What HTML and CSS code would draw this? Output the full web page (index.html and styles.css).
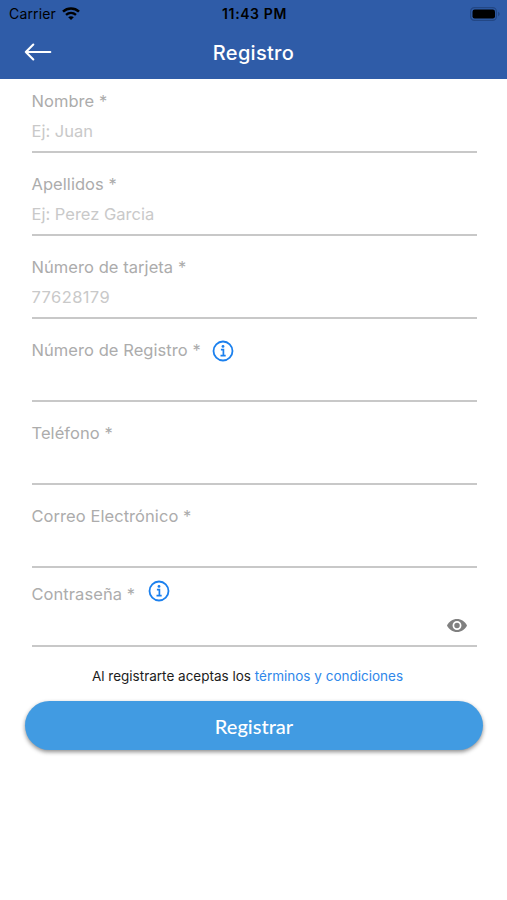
FILE: index.html
```html
<!DOCTYPE html>
<html lang="es">
<head>
  <meta charset="UTF-8">
  <meta name="viewport" content="width=device-width, initial-scale=1">
  <title>Registro</title>
  <link rel="stylesheet" href="styles.css">
</head>
<body>

<header class="cabecera">
  <div class="estado">
    <div class="operador">
      <span>Carrier</span>
      <svg class="wifi" viewBox="0 0 18 13">
        <path d="M1 4.6C5.6.5 12.4.5 17 4.6" fill="none" stroke="#000" stroke-width="2.6"/>
        <path d="M4 7.8c3-2.6 7-2.6 10 0" fill="none" stroke="#000" stroke-width="2.4"/>
        <path d="M9 13 6.2 10.2c1.6-1.4 4-1.4 5.6 0z"/>
      </svg>
    </div>
    <span class="hora">11:43 PM</span>
    <svg class="bateria" viewBox="0 0 30 14">
      <rect x=".6" y=".6" width="25.8" height="12.8" rx="3.8" fill="none" stroke="#234785" stroke-width="1.2"/>
      <rect x="2.500" y="2.500" width="22.500" height="9" rx="2.2"/>
      <path d="M28 4.8c2.2.8 2.2 3.6 0 4.4z" fill="#234785"/>
    </svg>
  </div>
  <div class="barra">
    <svg class="volver" viewBox="0 0 28 18">
      <path d="M9.3 1.5 1.8 9l7.5 7.5M1.8 9H26.3" fill="none" stroke="#fff" stroke-width="2.1" stroke-linecap="round" stroke-linejoin="round"/>
    </svg>
    <h1 class="titulo">Registro</h1>
  </div>
</header>

<form class="formulario">
  <div class="campo">
    <label class="etiqueta" for="nombre">Nombre *</label>
    <input class="entrada" id="nombre" type="text" placeholder="Ej: Juan">
  </div>
  <div class="campo">
    <label class="etiqueta" for="apellidos">Apellidos *</label>
    <input class="entrada" id="apellidos" type="text" placeholder="Ej: Perez Garcia">
  </div>
  <div class="campo">
    <label class="etiqueta" for="tarjeta">Número de tarjeta *</label>
    <input class="entrada numero" id="tarjeta" type="text" placeholder="77628179">
  </div>
  <div class="campo">
    <label class="etiqueta" for="registro">Número de Registro *
      <svg class="info" viewBox="0 0 22 22">
        <circle cx="11" cy="11" r="9.5" fill="none" stroke="#1b80ee" stroke-width="1.8"/>
        <circle cx="11" cy="6.4" r="1.4" fill="#1b80ee"/>
        <path d="M8.9 9.7h2.5v5.9M8.5 15.7h5.2" fill="none" stroke="#1b80ee" stroke-width="1.7"/>
      </svg>
    </label>
    <input class="entrada" id="registro" type="text">
  </div>
  <div class="campo">
    <label class="etiqueta" for="telefono">Teléfono *</label>
    <input class="entrada" id="telefono" type="tel">
  </div>
  <div class="campo">
    <label class="etiqueta" for="correo">Correo Electrónico *</label>
    <input class="entrada" id="correo" type="email">
  </div>
  <div class="campo campo-clave">
    <label class="etiqueta" for="clave">Contraseña *
      <svg class="info" viewBox="0 0 22 22">
        <circle cx="11" cy="11" r="9.5" fill="none" stroke="#1b80ee" stroke-width="1.8"/>
        <circle cx="11" cy="6.4" r="1.4" fill="#1b80ee"/>
        <path d="M8.9 9.7h2.5v5.9M8.5 15.7h5.2" fill="none" stroke="#1b80ee" stroke-width="1.7"/>
      </svg>
    </label>
    <div class="fila">
      <input class="entrada" id="clave" type="password">
      <svg class="ojo" viewBox="0 0 20 13">
        <path d="M0 6.5C2 2.5 5.7 0 10 0s8 2.5 10 6.5C18 10.5 14.3 13 10 13S2 10.5 0 6.500z" fill="#808080"/>
        <circle cx="10" cy="6.5" r="3.6" fill="#808080" stroke="#fff" stroke-width="1.7"/>
      </svg>
    </div>
  </div>

  <p class="terminos">Al registrarte aceptas los <a href="#">términos y condiciones</a></p>
  <button class="boton" type="button">Registrar</button>
</form>

</body>
</html>
```
FILE: styles.css
```css
* {
  margin: 0;
  padding: 0;
  box-sizing: border-box;
}

body {
  min-height: 100vh;
  background: white;
  font-family: Inter, "Liberation Sans", sans-serif;
}

.cabecera {
  height: 79px;
  background: #2f5ca8;
}

.estado {
  display: grid;
  grid-template-columns: 1fr auto 1fr;
  align-items: center;
  height: 27px;
  padding: 0 7px 0 9px;
  font-size: 14px;
  color: black;
}

.operador {
  display: flex;
  align-items: center;
  gap: 6px;
  letter-spacing: 0.15px;
}

.wifi {
  width: 18px;
  height: 13px;
}

.hora {
  font-size: 14px;
  font-weight: 600;
  letter-spacing: 0.6px;
}

.bateria {
  justify-self: end;
  width: 30px;
  height: 14px;
}

.barra {
  display: grid;
  grid-template-columns: 1fr auto 1fr;
  align-items: center;
  height: 51px;
  padding: 0 24px;
}

.volver {
  width: 28px;
  height: 18px;
  margin-top: -1px;
}

.titulo {
  font-size: 20px;
  font-weight: 500;
  letter-spacing: 0.3px;
  color: white;
}

.formulario {
  padding: 0 24px 20px 25px;
}

.campo {
  height: 83px;
  margin: 0 6px 0 6.5px;
  padding-top: 20px;
}

.campo:first-child {
  height: 74px;
  padding-top: 11px;
}

.etiqueta {
  display: flex;
  align-items: center;
  gap: 11px;
  height: 21px;
  font-size: 16.5px;
  letter-spacing: 0.06px;
  color: #acacac;
}

.info {
  width: 22px;
  height: 22px;
  margin-top: 3px;
}

.entrada {
  display: block;
  width: 100%;
  height: 42px;
  border: none;
  border-bottom: 2px solid #c8c8c8;
  outline: none;
  background: none;
  font: 16.5px Inter, "Liberation Sans", sans-serif;
  color: #555;
}

.entrada::placeholder {
  color: #c9c9c9;
}

.numero {
  letter-spacing: 0.4px;
}

.campo.campo-clave {
  height: 79px;
  padding-top: 15px;
}

.campo-clave .etiqueta {
  gap: 13px;
}

.campo-clave .info {
  margin-top: -6px;
}

.fila {
  display: flex;
  align-items: center;
  border-bottom: 2px solid #c8c8c8;
}

.fila .entrada {
  height: 41px;
  border: none;
}

.ojo {
  flex: none;
  width: 20px;
  height: 13px;
  margin: 1px 10px 0 0;
}

.terminos {
  margin-top: 20px;
  padding-right: 13px;
  text-align: center;
  font-size: 13.5px;
  line-height: 18px;
  color: #1c1c1c;
}

.terminos a {
  color: #2f87ea;
  text-decoration: none;
}

.boton {
  display: block;
  width: 100%;
  height: 49px;
  margin-top: 16px;
  border: none;
  border-radius: 25px;
  background: #419be2;
  box-shadow: 0 2px 4px rgba(0, 0, 0, 0.45);
  font: 500 20px Lato, "Liberation Sans", sans-serif;
  color: white;
}
```
